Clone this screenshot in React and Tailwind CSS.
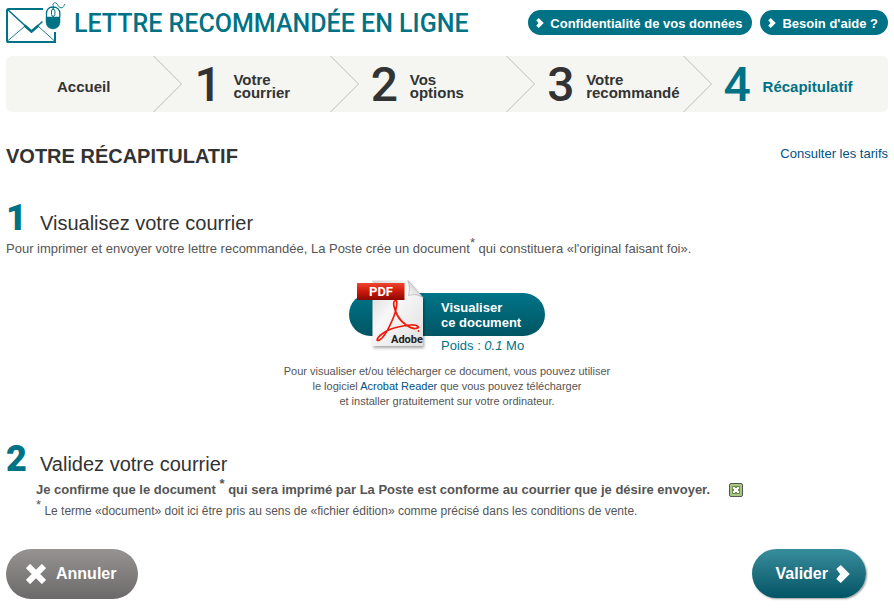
import { useState } from "react";

const STEPS = [
  { number: "", lines: ["Accueil"] },
  { number: "1", lines: ["Votre", "courrier"] },
  { number: "2", lines: ["Vos", "options"] },
  { number: "3", lines: ["Votre", "recommandé"] },
  { number: "4", lines: ["Récapitulatif"], current: true },
];

function Logo() {
  return (
    <svg className="shrink-0" width="60" height="44" viewBox="0 0 60 44" fill="none" stroke="#007285" aria-hidden="true">
      <path d="M37 9H2.500a1.500 1.500 0 0 0-1.500 1.500V40.500a1.500 1.500 0 0 0 1.500 1.500H49V32" strokeWidth="2" />
      <path d="M1.500 9.500 25.500 31.500 36.500 21.500" strokeWidth="1.500" />
      <path d="M18.500 25.500 25.500 31.500 32.500 25.500" strokeWidth="2.500" />
      <path d="M1.500 41 18.500 26.500M48.500 41 32.500 26.500" strokeWidth="0.900" />
      <path d="M1 42H50" strokeWidth="2.200" />
      <path d="M40 17h14v5a7 7 0 0 1-14 0z" fill="#007285" strokeWidth="0.500" />
      <path d="M40.500 17v-3.500c0-4 2.500-6.500 6.500-6.500s6.800 2.500 6.800 6.500V17M47.200 7v10" strokeWidth="1.300" />
      <path d="M45.500 11a1.700 1.700 0 0 1 3.400 0v3.500a1.700 1.700 0 0 1-3.400 0z" fill="#fff" strokeWidth="1" />
      <path d="M47.500 6.500C46 4 48 2 50 3S52 7.500 55 7.800 57.500 5.500 59 4" strokeWidth="0.900" />
    </svg>
  );
}

function Arrow({ className }) {
  return (
    <svg className={className} viewBox="0 0 12 16" fill="#fff" aria-hidden="true">
      <path d="M4 0 12 8 4 16 0 12.500 3.500 8 0 3.500z" />
    </svg>
  );
}

function PdfIcon() {
  return (
    <svg className="absolute -top-[13px] left-2" width="76" height="73" viewBox="0 0 76 73" aria-hidden="true">
      <defs>
        <linearGradient id="paper" x1="0" y1="0" x2="1" y2="1">
          <stop offset="0" stopColor="#d4d4d4" />
          <stop offset="0.400" stopColor="#f8f8f8" />
          <stop offset="1" stopColor="#e0e0e0" />
        </linearGradient>
        <linearGradient id="red" x1="0" y1="0" x2="0" y2="1">
          <stop offset="0" stopColor="#f0452f" />
          <stop offset="0.450" stopColor="#cf1c0c" />
          <stop offset="1" stopColor="#8c0800" />
        </linearGradient>
        <linearGradient id="fold" x1="0" y1="1" x2="1" y2="0">
          <stop offset="0" stopColor="#fff" />
          <stop offset="1" stopColor="#b8b8b8" />
        </linearGradient>
        <filter id="shade" x="-20%" y="-20%" width="140%" height="140%">
          <feDropShadow dx="1" dy="2" stdDeviation="1.500" floodColor="#000" floodOpacity="0.350" />
        </filter>
      </defs>
      <path d="M15.500 0.500H51L66 17.500V66H15.500z" fill="url(#paper)" filter="url(#shade)" />
      <path d="M51 0.500 66 17.500C61 14.500 57 14 51.500 15.500 53 10 52.500 5 51 0.500z" fill="url(#fold)" stroke="#999" strokeWidth="0.500" />
      <path
        d="M38.500 20.500c-3.500 1-1.500 8 2 15s13 13.500 18 13c5.500-.500 2.500-4-5-3.500-10 .500-22 4-28.500 9-6 4.500-6 8-2.500 6 4.500-2.500 10.500-14 14.500-24 2.500-6 4-16.500 1.500-15.500z"
        fill="none"
        stroke="#ee1c0c"
        strokeWidth="1.700"
      />
      <circle cx="61.500" cy="51" r="0.900" fill="#ee1c0c" />
      <rect x="0" y="3" width="47.500" height="17" fill="url(#red)" />
      <text x="12" y="16" fill="#fff" className="font-['Roboto',sans-serif] text-[13px] font-bold">PDF</text>
      <text x="34" y="63" fill="#222" className="font-['Roboto',sans-serif] text-[11px] font-bold">Adobe</text>
    </svg>
  );
}

function HelpLink({ children }) {
  return (
    <a href="#aide" className="flex h-[25px] items-center gap-1.5 rounded-full bg-[#007285] pr-2.5 pl-2 text-[13px] font-bold text-white">
      <Arrow className="h-2.5 w-2" />
      <span className="pt-0.5">{children}</span>
    </a>
  );
}

function SectionTitle({ number, children }) {
  return (
    <h3 className="flex items-baseline text-xl leading-9 text-[#333]">
      <span className="w-[34px] font-['Roboto',sans-serif] text-4xl leading-9 font-black text-[#007285]">{number}</span>
      {children}
    </h3>
  );
}

function Asterisk() {
  return <sup className="text-[13px]">*</sup>;
}

export default function App() {
  const [confirmed, setConfirmed] = useState(true);

  return (
    <div className="bg-white px-1.5 pb-2.5 font-['Liberation_Sans',Arial,sans-serif] text-[13px] leading-4 text-[#555]">
      <header className="flex h-14 items-start">
        <Logo />
        <h1 className="ml-2 pt-1.5 font-['Roboto',sans-serif] text-[25px] leading-9 font-medium whitespace-nowrap text-[#007285]">
          LETTRE RECOMMANDÉE EN LIGNE
        </h1>
        <nav className="ml-auto flex gap-2 pt-2.5 whitespace-nowrap">
          <HelpLink>Confidentialité de vos données</HelpLink>
          <HelpLink>Besoin d'aide ?</HelpLink>
        </nav>
      </header>

      <ol className="grid h-14 grid-cols-5 rounded-md bg-[#f5f5f1] text-[15px] leading-[13px] font-bold text-[#333]">
        {STEPS.map((step, i) => (
          <li key={i} className={step.current ? "flex items-center pl-3 text-[#007285]" : "flex items-center pl-3"}>
            <span className="w-[39px] shrink-0 pt-0.5 font-['Roboto',sans-serif] text-5xl leading-none font-medium">{step.number}</span>
            <span className="relative z-10 pt-1">
              {step.lines.map((line) => (
                <span key={line} className="block">{line}</span>
              ))}
            </span>
            {i < 4 && (
              <svg className="-ml-7 ml-auto h-14 w-[29px] shrink-0" viewBox="0 0 29 56" fill="none" stroke="#bbb" aria-hidden="true">
                <path d="M0.500 0 28.500 28 0.500 56" />
              </svg>
            )}
          </li>
        ))}
      </ol>

      <main>
        <div className="mt-8 flex items-center justify-between">
          <h2 className="text-xl leading-6 font-bold text-[#333]">VOTRE RÉCAPITULATIF</h2>
          <a href="#tarifs" className="pb-1 text-[#005184]">Consulter les tarifs</a>
        </div>

        <section className="mt-8">
          <SectionTitle number="1">Visualisez votre courrier</SectionTitle>
          <p>
            Pour imprimer et envoyer votre lettre recommandée, La Poste crée un document<Asterisk /> qui constituera «l'original faisant foi».
          </p>

          <div className="mt-9 flex flex-col items-center">
            <a href="#document" className="block w-[196px] text-[#007285]">
              <span className="relative block h-[43px] rounded-full bg-linear-to-b from-[#007488] to-[#005563] pt-[7px] pl-[92px] leading-[15px] font-bold text-white">
                Visualiser
                <br />
                ce document
                <PdfIcon />
              </span>
              <span className="mt-0.5 block pl-[92px]">
                Poids : <em>0.1</em> Mo
              </span>
            </a>
            <p className="mt-2.5 text-center text-[11px] leading-[15px]">
              Pour visualiser et/ou télécharger ce document, vous pouvez utiliser
              <br />
              le logiciel <a href="#reader" className="text-[#005184]">Acrobat Reader</a> que vous pouvez télécharger
              <br />
              et installer gratuitement sur votre ordinateur.
            </p>
          </div>
        </section>

        <section className="mt-8">
          <SectionTitle number="2">Validez votre courrier</SectionTitle>
          <div className="pl-[30px]">
            <div className="flex items-center">
              <label htmlFor="confirm" className="font-bold">
                Je confirme que le document <Asterisk /> qui sera imprimé par La Poste est conforme au courrier que je désire envoyer.
              </label>
              <span className="ml-[19px] grid">
                <input
                  id="confirm"
                  type="checkbox"
                  checked={confirmed}
                  onChange={(e) => setConfirmed(e.target.checked)}
                  className="col-start-1 row-start-1 size-3.5 appearance-none rounded-xs border border-[#555] bg-[#a5c882]"
                />
                {confirmed && (
                  <svg className="pointer-events-none col-start-1 row-start-1 size-3.5" viewBox="0 0 14 14" aria-hidden="true">
                    <path d="M3 3h8v8H3z" fill="#6f8a50" />
                    <path d="M4 4h2v1h2V4h2v2H9v2h1v2H8V9H6v1H4V8h1V6H4z" fill="#fff" />
                  </svg>
                )}
              </span>
            </div>
            <p className="mt-[3px] text-xs leading-5">
              <Asterisk /> Le terme «document» doit ici être pris au sens de «fichier édition» comme précisé dans les conditions de vente.
            </p>
          </div>
        </section>

        <div className="mt-7 flex items-start justify-between pr-[22px] text-base font-bold text-white">
          <button type="button" className="flex h-[50px] items-center gap-2.5 rounded-full bg-linear-to-b from-[#969492] to-[#6c696a] pr-[22px] pl-5">
            <svg className="size-5" viewBox="0 0 20 20" stroke="#fff" strokeWidth="6" aria-hidden="true">
              <path d="M2 2 18 18M18 2 2 18" />
            </svg>
            Annuler
          </button>
          <button type="button" className="flex h-[49px] items-center gap-2 rounded-full bg-linear-to-b from-[#378d9c] to-[#005565] pr-4 pl-6 shadow-[1px_1px_2px_#0006]">
            Valider
            <Arrow className="h-[18px] w-3.5" />
          </button>
        </div>
      </main>
    </div>
  );
}
